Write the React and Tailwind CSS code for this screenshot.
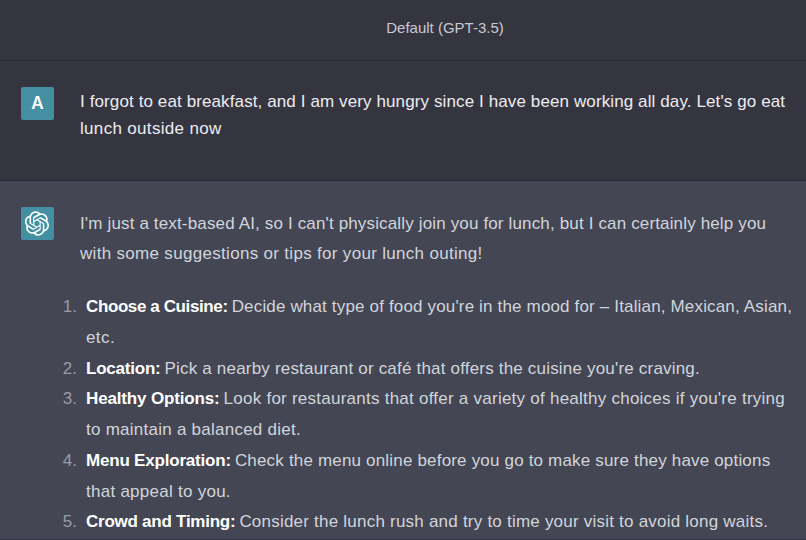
const items = [
  {
    title: "Choose a Cuisine:",
    titleTrack: "tracking-[-0.39px]",
    lines: [
      ["Decide what type of food you're in the mood for – Italian, Mexican, Asian,", "tracking-[0.16px]"],
      ["etc.", "tracking-[0.4px]"],
    ],
  },
  {
    title: "Location:",
    titleTrack: "tracking-[-0.22px]",
    lines: [["Pick a nearby restaurant or café that offers the cuisine you're craving.", "tracking-[0.19px]"]],
  },
  {
    title: "Healthy Options:",
    titleTrack: "tracking-[-0.15px]",
    lines: [
      ["Look for restaurants that offer a variety of healthy choices if you're trying", "tracking-[0.245px]"],
      ["to maintain a balanced diet.", "tracking-[0.25px]"],
    ],
  },
  {
    title: "Menu Exploration:",
    titleTrack: "tracking-[-0.2px]",
    lines: [
      ["Check the menu online before you go to make sure they have options", "tracking-[0.18px]"],
      ["that appeal to you.", "tracking-[0.26px]"],
    ],
  },
  {
    title: "Crowd and Timing:",
    titleTrack: "tracking-[-0.25px]",
    lines: [["Consider the lunch rush and try to time your visit to avoid long waits.", "tracking-[0.22px]"]],
  },
];

function Avatar({ children }) {
  return (
    <div className="flex size-[33px] shrink-0 items-center justify-center rounded-[2px] bg-[#4490a2] text-white">
      {children}
    </div>
  );
}

function AssistantLogo() {
  return (
    <svg viewBox="0 0 41 41" className="size-[25px] -translate-x-[0.5px]" fill="currentColor">
      <path d="M37.5324 16.8707C37.9808 15.5241 38.1363 14.0974 37.9886 12.6859C37.8409 11.2744 37.3934 9.91076 36.676 8.68622C35.6126 6.83404 33.9882 5.3676 32.0373 4.4985C30.0864 3.62941 27.9098 3.40259 25.8215 3.85078C24.8796 2.7893 23.7219 1.94125 22.4257 1.36341C21.1295 0.785575 19.7249 0.491269 18.3058 0.500197C16.1708 0.495044 14.0893 1.16803 12.3614 2.42214C10.6335 3.67624 9.34853 5.44666 8.6917 7.47815C7.30085 7.76286 5.98686 8.3414 4.8377 9.17505C3.68854 10.0087 2.73073 11.0782 2.02839 12.312C0.956464 14.1591 0.498905 16.2988 0.721698 18.4228C0.944492 20.5467 1.83612 22.5449 3.268 24.1293C2.81966 25.4759 2.66413 26.9026 2.81182 28.3141C2.95951 29.7256 3.40701 31.0892 4.12437 32.3138C5.18791 34.1659 6.8123 35.6322 8.76321 36.5013C10.7141 37.3704 12.8907 37.5973 14.9789 37.1492C15.9208 38.2107 17.0786 39.0587 18.3747 39.6366C19.6709 40.2144 21.0755 40.5087 22.4946 40.4998C24.6307 40.5054 26.7133 39.8321 28.4418 38.5772C30.1704 37.3223 31.4556 35.5506 32.1119 33.5179C33.5027 33.2332 34.8167 32.6547 35.9659 31.821C37.115 30.9874 38.0728 29.9178 38.7752 28.684C39.8458 26.8371 40.3023 24.6979 40.0789 22.5748C39.8556 20.4517 38.9639 18.4544 37.5324 16.8707ZM22.4978 37.8849C20.7443 37.8874 19.0459 37.2733 17.6994 36.1501C17.7601 36.117 17.8666 36.0586 17.936 36.0161L25.9004 31.4156C26.1003 31.3019 26.2663 31.137 26.3813 30.9378C26.4964 30.7386 26.5563 30.5124 26.5549 30.2825V19.0542L29.9213 20.998C29.9389 21.0068 29.9541 21.0198 29.9656 21.0359C29.977 21.052 29.9842 21.0707 29.9867 21.0902V30.3889C29.9842 32.375 29.1946 34.2791 27.7909 35.6841C26.3872 37.0892 24.4838 37.8806 22.4978 37.8849ZM6.39227 31.0064C5.51397 29.4888 5.19742 27.7107 5.49804 25.9832C5.55718 26.0187 5.66048 26.0818 5.73461 26.1244L13.699 30.7248C13.8975 30.8408 14.1233 30.902 14.3532 30.902C14.583 30.902 14.8088 30.8408 15.0073 30.7248L24.731 25.1103V28.9979C24.7321 29.0177 24.7283 29.0376 24.7199 29.0556C24.7115 29.0736 24.6988 29.0893 24.6829 29.1012L16.6317 33.7497C14.9096 34.7416 12.8643 35.0097 10.9447 34.4954C9.02506 33.9811 7.38785 32.7263 6.39227 31.0064ZM4.29707 13.6194C5.17156 12.0998 6.55279 10.9364 8.19885 10.3327C8.19885 10.4013 8.19491 10.5228 8.19491 10.6071V19.808C8.19351 20.0378 8.25334 20.2638 8.36823 20.4629C8.48312 20.6619 8.64893 20.8267 8.84863 20.9404L18.5723 26.5542L15.206 28.4979C15.1894 28.5089 15.1703 28.5155 15.1505 28.5173C15.1307 28.5191 15.1107 28.516 15.0924 28.5082L7.04046 23.8557C5.32135 22.8601 4.06716 21.2235 3.55289 19.3046C3.03862 17.3858 3.30624 15.3413 4.29707 13.6194ZM31.955 20.0556L22.2312 14.4411L25.5976 12.4981C25.6142 12.4872 25.6333 12.4805 25.6531 12.4787C25.6729 12.4769 25.6928 12.4801 25.7111 12.4879L33.7631 17.1364C34.9967 17.849 36.0017 18.8982 36.6606 20.1613C37.3194 21.4244 37.6047 22.849 37.4832 24.2684C37.3617 25.6878 36.8382 27.0432 35.9743 28.1759C35.1103 29.3086 33.9415 30.1717 32.6047 30.6641C32.6047 30.5947 32.6047 30.4733 32.6047 30.3889V21.188C32.6066 20.9586 32.5474 20.7328 32.4332 20.5338C32.319 20.3348 32.154 20.1698 31.955 20.0556ZM35.3055 15.0128C35.2464 14.9765 35.1431 14.9142 35.069 14.8717L27.1045 10.2712C26.906 10.1554 26.6803 10.0943 26.4504 10.0943C26.2206 10.0943 25.9948 10.1554 25.7963 10.2712L16.0726 15.8858V11.9982C16.0715 11.9783 16.0753 11.9585 16.0837 11.9405C16.0921 11.9225 16.1048 11.9068 16.1207 11.8949L24.1719 7.25025C25.4053 6.53903 26.8158 6.19376 28.2383 6.25482C29.6608 6.31589 31.0364 6.78077 32.2044 7.59508C33.3723 8.40939 34.2842 9.53945 34.8334 10.8531C35.3826 12.1667 35.5464 13.6095 35.3055 15.0128ZM14.2424 21.9419L10.8752 19.9981C10.8576 19.9893 10.8423 19.9763 10.8309 19.9602C10.8195 19.9441 10.8122 19.9254 10.8098 19.9058V10.6071C10.8107 9.18295 11.2173 7.78848 11.9819 6.58696C12.7466 5.38544 13.8377 4.42659 15.1275 3.82264C16.4173 3.21869 17.8524 2.99464 19.2649 3.1767C20.6775 3.35876 22.0089 3.93941 23.1034 4.85067C23.0427 4.88379 22.937 4.94215 22.8668 4.98473L14.9024 9.58517C14.7025 9.69878 14.5366 9.86356 14.4215 10.0626C14.3065 10.2616 14.2466 10.4877 14.2479 10.7175L14.2424 21.9419ZM16.071 17.9991L20.4018 15.4978L24.7325 17.9975V22.9985L20.4018 25.4983L16.071 22.9985V17.9991Z" />
    </svg>
  );
}

export default function App() {
  return (
    <div className="flex h-[540px] w-[806px] flex-col overflow-hidden whitespace-nowrap border-b border-[#353540] bg-[#444653] font-['Liberation_Sans',Arial,sans-serif] text-[17px]">
      <header className="flex h-[61px] shrink-0 justify-center border-b border-[#2b2b36] bg-[#353540] pt-[16px] pl-[84px] text-[15px] leading-[24px] text-[#c9c9d4]">
        <span>Default (GPT-3.5)</span>
      </header>
      <section className="flex h-[120px] shrink-0 gap-[26px] border-b border-[#2b2b36] bg-[#353540] pt-[26px] pl-[21px] text-[#ececf1]">
        <Avatar>
          <span className="pt-px font-['Inter',sans-serif] text-[17px] font-semibold">A</span>
        </Avatar>
        <div className="pt-px leading-[27px]">
          <p className="tracking-[0.11px]">I forgot to eat breakfast, and I am very hungry since I have been working all day. Let's go eat</p>
          <p className="tracking-[0.32px]">lunch outside now</p>
        </div>
      </section>
      <section className="flex shrink-0 gap-[26px] pt-[26px] pl-[21px] text-[#d1d5db]">
        <Avatar>
          <AssistantLogo />
        </Avatar>
        <div className="pt-[1.5px] leading-[30.75px]">
          <p className="tracking-[0.15px]">I'm just a text-based AI, so I can't physically join you for lunch, but I can certainly help you</p>
          <p className="tracking-[0.31px]">with some suggestions or tips for your lunch outing!</p>
          <ol className="mt-[22px] -ml-[23px]">
            {items.map((item, i) => (
              <li key={item.title} className="flex">
                <span className="mr-[9px] w-[20px] text-right text-[#9a9ba8]">{i + 1}.</span>
                <div>
                  {item.lines.map(([text, track], j) => (
                    <div key={text} className="flex gap-[4px]">
                      {j === 0 && <strong className={`font-bold text-white ${item.titleTrack}`}>{item.title}</strong>}
                      <span className={track}>{text}</span>
                    </div>
                  ))}
                </div>
              </li>
            ))}
          </ol>
        </div>
      </section>
    </div>
  );
}
